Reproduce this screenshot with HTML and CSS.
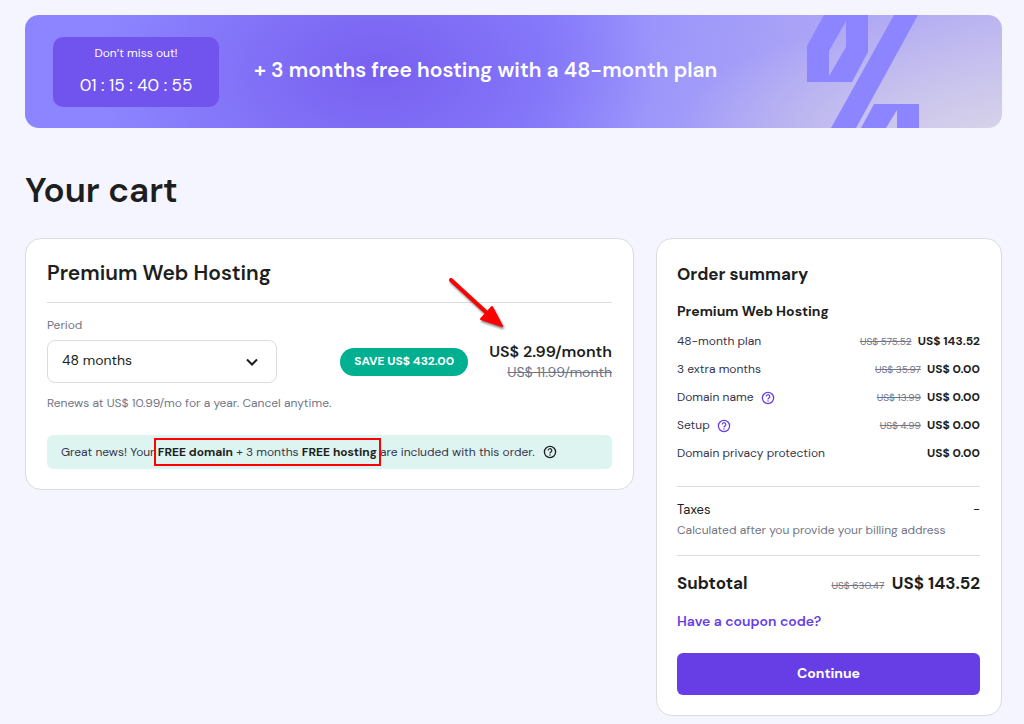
FILE: index.html
```html
<!DOCTYPE html>
<html lang="en">
<head>
  <meta charset="utf-8">
  <meta name="viewport" content="width=device-width, initial-scale=1">
  <title>Your cart</title>
  <link rel="stylesheet" href="styles.css">
</head>
<body>
  <svg class="sprite" aria-hidden="true">
    <symbol id="help" viewBox="0 0 14 14">
      <circle cx="7" cy="7" r="5.6" fill="none" stroke="currentColor" stroke-width="1.3"/>
      <path d="M5.2 5.6a1.8 1.8 0 1 1 2.7 1.5c-.6.4-.9.7-.9 1.3" fill="none" stroke="currentColor" stroke-width="1.2"/>
      <circle cx="7" cy="10" r=".75" fill="currentColor"/>
    </symbol>
  </svg>
  <div class="page">
    <div class="banner">
      <div class="timer">
        <div class="timer-label">Don’t miss out!</div>
        <div class="timer-value">01 : 15 : 40 : 55</div>
      </div>
      <div class="banner-text">+ 3 months free hosting with a 48-month plan</div>
      <svg class="percent" viewBox="0 0 112 113" aria-hidden="true">
        <path fill-rule="evenodd" d="M17 0H61V37L45 67H0V31ZM39 6V32L22 61V36Z"/>
        <path d="M87 0H111L49 113H24Z"/>
        <path d="M67 89H112V113H90V95L79 113H54Z"/>
      </svg>
    </div>

    <h1>Your cart</h1>

    <div class="columns">
      <section class="card cart">
        <h2>Premium Web Hosting</h2>
        <label for="period">Period</label>
        <div class="period-row">
          <div class="select">
            <select id="period">
              <option>48 months</option>
              <option>24 months</option>
              <option>12 months</option>
              <option>1 month</option>
            </select>
            <svg viewBox="0 0 12 8" aria-hidden="true"><path d="M1 1.5L6 6.5L11 1.5"/></svg>
          </div>
          <span class="save">SAVE US$ 432.00</span>
          <div class="price">
            <strong>US$ 2.99/month</strong>
            <s>US$ 11.99/month</s>
          </div>
        </div>
        <p class="renews">Renews at US$ 10.99/mo for a year. Cancel anytime.</p>
        <div class="notice">
          <span>Great news! Your <span class="marked"><b>FREE domain</b> + 3 months <b>FREE hosting</b></span> are included with this order.</span>
          <svg class="help"><use href="#help"/></svg>
        </div>
        <svg class="arrow" viewBox="0 0 60 54" aria-hidden="true">
          <path d="M3 3L39 36" stroke="#f00" stroke-width="4" stroke-linecap="round"/>
          <path d="M44 30L54 49L33 42Z" fill="#f00" stroke="#f00" stroke-width="2" stroke-linejoin="round"/>
        </svg>
      </section>

      <section class="card summary">
        <h3>Order summary</h3>
        <h4>Premium Web Hosting</h4>
        <table>
          <tr>
            <th>48-month plan</th>
            <td><s>US$ 575.52</s> <b>US$ 143.52</b></td>
          </tr>
          <tr>
            <th>3 extra months</th>
            <td><s>US$ 35.97</s> <b>US$ 0.00</b></td>
          </tr>
          <tr>
            <th>Domain name <svg class="help"><use href="#help"/></svg></th>
            <td><s>US$ 13.99</s> <b>US$ 0.00</b></td>
          </tr>
          <tr>
            <th>Setup <svg class="help"><use href="#help"/></svg></th>
            <td><s>US$ 4.99</s> <b>US$ 0.00</b></td>
          </tr>
          <tr>
            <th>Domain privacy protection</th>
            <td><b>US$ 0.00</b></td>
          </tr>
        </table>
        <div class="taxes">
          <div class="row"><span>Taxes</span><span>-</span></div>
          <p>Calculated after you provide your billing address</p>
        </div>
        <div class="row subtotal">
          <strong>Subtotal</strong>
          <span><s>US$ 630.47</s> <strong>US$ 143.52</strong></span>
        </div>
        <a class="coupon" href="#">Have a coupon code?</a>
        <button type="button">Continue</button>
      </section>
    </div>
  </div>
</body>
</html>
```
FILE: styles.css
```css
* {
  box-sizing: border-box;
}
body {
  margin: 0;
  background: #f4f5ff;
  color: #1d1e20;
  font-family: "DM Sans", Inter, sans-serif;
  font-size: 12px;
  line-height: 20px;
}
h1, h2, h3, h4, p {
  margin: 0;
}
h3, h4, b, strong {
  font-weight: 700;
}
.sprite {
  display: none;
}
.page {
  padding: 15px 22px 8px 25px;
}

/* banner */
.banner {
  display: flex;
  align-items: center;
  height: 113px;
  padding: 0 83px 0 28px;
  border-radius: 14px;
  overflow: hidden;
  color: #fff;
  background:
    radial-gradient(ellipse 280px 170px at 36% 50%, #7860f0 0%, rgba(120, 96, 240, 0) 100%),
    radial-gradient(ellipse 330px 130px at 100% 110%, #d8d4e8 0%, rgba(216, 212, 232, 0) 100%),
    linear-gradient(105deg, #8c85ff 0%, #8c85ff 52%, #9c96fb 64%, #aca5f6 80%, #bcb6f1 100%);
}
.timer {
  width: 166px;
  height: 70px;
  padding-top: 6px;
  border-radius: 10px;
  background: #7153ed;
  text-align: center;
}
.timer-value {
  margin-top: 10px;
  font-size: 17px;
  line-height: 24px;
}
.banner-text {
  margin: 0 0 3px 35px;
  font-size: 21px;
  line-height: 28px;
  font-weight: 600;
}
.percent {
  flex: none;
  width: 112px;
  height: 113px;
  margin-left: auto;
  fill: #8c85ff;
}

h1 {
  margin: 38px 0 24px;
  font-size: 35px;
  line-height: 48px;
  font-weight: 600;
}

/* cards */
.columns {
  display: grid;
  grid-template-columns: 609fr 346fr;
  gap: 22px;
  align-items: start;
}
.card {
  border: 1px solid #dadce0;
  border-radius: 16px;
  background: #fff;
  padding: 20px 21px;
}
.help {
  width: 14px;
  height: 14px;
}
s {
  color: #727586;
}

/* cart */
.cart {
  position: relative;
}
h2 {
  padding-bottom: 14px;
  border-bottom: 1px solid #dadce0;
  font-size: 21px;
  line-height: 29px;
  font-weight: 600;
}
label {
  display: block;
  margin: 12px 0 5px;
  color: #727586;
}
.period-row {
  display: flex;
  align-items: center;
}
.select {
  position: relative;
  width: 230px;
  margin-right: auto;
}
.select select {
  appearance: none;
  width: 100%;
  height: 43px;
  padding: 0 14px 3px;
  border: 1px solid #dadce0;
  border-radius: 8px;
  background: #fff;
  color: inherit;
  font: inherit;
  font-size: 14px;
}
.select svg {
  position: absolute;
  top: 18px;
  right: 19px;
  width: 12px;
  height: 8px;
  fill: none;
  stroke: #1d1e20;
  stroke-width: 2;
  pointer-events: none;
}
.save {
  padding: 3px 14px 5px;
  border-radius: 14px;
  background: #00b090;
  color: #fff;
  font-weight: 700;
}
.price {
  margin-left: 21px;
  text-align: right;
}
.price strong, .price s {
  display: block;
}
.price strong {
  font-size: 16px;
  font-weight: 600;
}
.price s {
  font-size: 14px;
}
.renews {
  margin: 10px 0 22px;
  color: #727586;
}
.notice {
  display: flex;
  align-items: center;
  gap: 8px;
  height: 34px;
  padding: 0 14px;
  border-radius: 6px;
  background: #def4f0;
  color: #36344d;
  white-space: nowrap;
}
.notice b {
  color: #1d1e20;
}
.notice .help {
  color: #1d1e20;
}
.marked {
  position: relative;
}
.marked::after {
  content: "";
  position: absolute;
  inset: -6px -4px;
  border: 2px solid #f00;
}
.arrow {
  position: absolute;
  top: 38px;
  right: 125px;
  width: 60px;
  height: 54px;
  filter: drop-shadow(1px 2px 1px rgba(0, 0, 0, .5));
}

/* order summary */
.summary {
  padding-left: 20px;
}
h3 {
  font-size: 17px;
  line-height: 30px;
}
h4 {
  margin: 12px 0 6px;
  font-size: 14px;
}
table {
  width: 100%;
  border-collapse: collapse;
}
th, td {
  height: 28px;
  padding: 0;
}
th {
  text-align: left;
  font-weight: 400;
  color: #36344d;
}
th .help {
  margin-left: 4px;
  vertical-align: -4px;
  color: #673de6;
}
td {
  text-align: right;
}
td s, .subtotal s {
  margin-right: 3px;
  font-size: 10px;
}
.row {
  display: flex;
  justify-content: space-between;
  align-items: baseline;
}
.taxes {
  margin: 19px 0 12px;
  padding: 13px 0 15px;
  border: solid #dadce0;
  border-width: 1px 0;
}
.taxes .row {
  font-size: 13px;
}
.taxes p {
  color: #727586;
}
.subtotal {
  font-size: 17px;
  line-height: 30px;
}
.coupon {
  display: block;
  margin: 10px 0 22px;
  color: #673de6;
  font-size: 14px;
  font-weight: 600;
  text-decoration: none;
}
button {
  display: block;
  width: 100%;
  height: 42px;
  padding: 0 0 2px;
  border: 0;
  border-radius: 6px;
  background: #673de6;
  color: #fff;
  font: inherit;
  font-size: 14px;
  font-weight: 700;
  cursor: pointer;
}
```
